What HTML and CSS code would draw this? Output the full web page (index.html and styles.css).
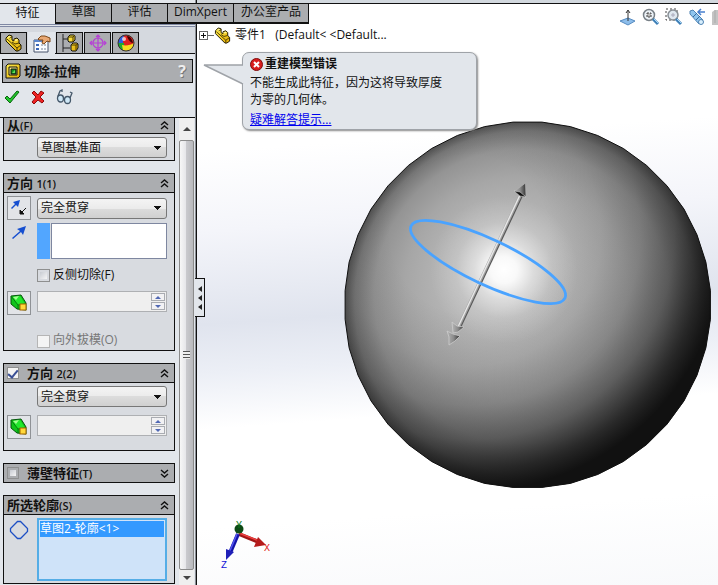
FILE: index.html
```html
<!DOCTYPE html>
<html lang="zh-CN">
<head>
<meta charset="utf-8">
<title>切除-拉伸</title>
<link rel="stylesheet" href="styles.css">
</head>
<body>
<svg class="defs" aria-hidden="true">
  <defs>
    <linearGradient id="gold" x1="0" y1="0" x2="1" y2="1"><stop offset="0" stop-color="#ffee50"/><stop offset="1" stop-color="#e0a800"/></linearGradient>
    <symbol id="part" viewBox="0 0 18 18">
      <path d="M1 4L4 1l3 1v4l2 1V5l3-1 2 2v3l2 2v4l-3 2h-2L1 7z" fill="url(#gold)" stroke="#1d1700"/>
      <path d="M2 5l10 9v3M12 14l4-3M4 4l3-1M7 8l3 2 4-1" fill="none" stroke="#4c3b00"/>
      <path d="M3 3l2-1 1 1-2 1zM9 6l3-1 1 1-2 1z" fill="#fff7a0"/>
    </symbol>
    <symbol id="draft" viewBox="0 0 18 18">
      <path d="M1 2l10-1 5 8v7l-9-1-6-5z" fill="#10c41b" stroke="#05560a"/>
      <path d="M2 3l8-1 5 8-7 1z" fill="#22e82c"/>
      <path d="M1 2l7 9v4M8 11l8-1" fill="none" stroke="#067a0e"/>
      <path d="M3 3l6-1-3 4z" fill="#a4ff94"/>
      <rect x="10" y="10" width="6" height="6" fill="#ffd83a" stroke="#a36400"/>
    </symbol>
    <symbol id="up2" viewBox="0 0 9 9"><path d="M1 4l3.500-3 3.500 3M1 8l3.500-3L8 8" fill="none" stroke="#111" stroke-width="1.400"/></symbol>
    <symbol id="down2" viewBox="0 0 9 9"><path d="M1 1l3.500 3L8 1M1 5l3.500 3L8 5" fill="none" stroke="#111" stroke-width="1.400"/></symbol>
  </defs>
</svg>
<div class="app">
  <aside class="panel">
    <nav class="tabs">
      <button class="tab active">特征</button>
      <button class="tab">草图</button>
      <button class="tab">评估</button>
      <button class="tab tight">DimXpert</button>
      <button class="tab">办公室产品</button>
    </nav>
    <div class="managers">
      <button class="mgr" aria-label="设计树"><svg width="18" height="18"><use href="#part"/></svg></button>
      <button class="mgr active" aria-label="属性">
        <svg width="18" height="18" viewBox="0 0 18 18"><path d="M1 5h14v12H1z" fill="#fafcff" stroke="#46536b"/><path d="M1 6h14" stroke="#5b86cc" stroke-width="2"/><path d="M3 9h3v2H3zM3 13h3v2H3z" fill="#3b67b8"/><path d="M8 10h6M8 14h6" stroke="#77859a" stroke-dasharray="2 1"/><path d="M5 4l3-3h4l5 2v4l-3-1-3 3-2-1 1-3H6z" fill="#e9a873" stroke="#7c4818"/></svg>
      </button>
      <button class="mgr" aria-label="配置">
        <svg width="18" height="18" viewBox="0 0 18 18"><path d="M2 0v18M2 5h5M2 14h7" stroke="#222" fill="none"/><path d="M7 3l2-2h4l1 1v4l-2 2H8L7 7zM10 11l2-2h4l1 1v4l-2 3h-4l-1-1z" fill="url(#gold)" stroke="#111"/><path d="M7 3h5l2-2M12 3v5M10 11h5l2-1M15 11v5" fill="none" stroke="#4c3b00"/></svg>
      </button>
      <button class="mgr" aria-label="尺寸专家">
        <svg width="18" height="18" viewBox="0 0 18 18"><g fill="none" stroke="#b63fd6" stroke-width="1.200"><circle cx="9" cy="9" r="5"/><path d="M9 1v16M1 9h16M7 3l2-2 2 2M7 15l2 2 2-2M3 7L1 9l2 2M15 7l2 2-2 2"/></g></svg>
      </button>
      <button class="mgr" aria-label="外观">
        <svg width="18" height="18" viewBox="0 0 18 18"><circle cx="9" cy="9" r="8" fill="#e02020"/><path d="M1 9a8 8 0 0 1 6-7.700C6 4 6 7 6 10z" fill="#2a5ce0"/><path d="M1 9l6 0 1 7.900A8 8 0 0 1 1 9z" fill="#1faa2d"/><path d="M5 11c4 1 9 0 12-2a8 8 0 0 1-11 7.500z" fill="#f5dc20"/><path d="M10 2c3 0 5 3 6 7-2 0-5-3-6-7z" fill="#400"/><circle cx="7" cy="5" r="2" fill="#fff" opacity=".7"/><circle cx="9" cy="9" r="8" fill="none" stroke="#333"/></svg>
      </button>
    </div>
    <h1 class="title">
      <svg width="16" height="16" viewBox="0 0 16 16"><path d="M1 3l2-2h11l1 1v11l-2 2H1z" fill="url(#gold)" stroke="#111"/><path d="M4 4h8v8H4z" fill="#fff38a" stroke="#111"/><path d="M6 6h5v5H6z" fill="#12951c" stroke="#111"/><path d="M7 10l3-3v3z" fill="#66e05d"/></svg>
      <span>切除-拉伸</span>
      <button class="help" aria-label="帮助">?</button>
    </h1>
    <div class="actions">
      <button aria-label="确定"><svg width="16" height="16" viewBox="0 0 16 16"><path d="M1 9l2-2 3 3 7-8 2 1-9 11z" fill="#22c52c" stroke="#07630d"/></svg></button>
      <button aria-label="取消"><svg width="14" height="14" viewBox="0 0 14 14"><path d="M1 3l2-2 4 4 3-4 3 2-4 4 4 4-2 2-4-3-4 4-2-2 4-5z" fill="#ee2424" stroke="#8e0808"/></svg></button>
      <button aria-label="预览"><svg width="18" height="16" viewBox="0 0 18 16"><g fill="#cfe8f7" stroke="#45586a" stroke-width="1.300"><ellipse cx="4.500" cy="9.500" rx="3" ry="3.500"/><ellipse cx="11.500" cy="11" rx="3" ry="3.500"/><path d="M2 7L4 2l2-1v2M14 9l2-5-2-1M7 9l2 1" fill="none"/></g></svg></button>
    </div>
    <div class="scroller">
      <div class="groups">
        <section class="group first">
          <header><h2>从<b>(F)</b></h2><button class="fold" aria-label="折叠"><svg width="9" height="9"><use href="#up2"/></svg></button></header>
          <div class="body">
            <div class="row"><span></span><select aria-label="从"><option>草图基准面</option></select></div>
          </div>
        </section>
        <section class="group">
          <header><h2>方向 <b>1(1)</b></h2><button class="fold" aria-label="折叠"><svg width="9" height="9"><use href="#up2"/></svg></button></header>
          <div class="body">
            <div class="row">
              <button class="tool" aria-label="反向"><svg width="18" height="18" viewBox="0 0 18 18"><path d="M1 9l4-4-2-2 7-2-2 7-2-2-4 4z" fill="#164fd0"/><path d="M16 9l-5 5M10 11v4h4z" fill="#111" stroke="#111"/></svg></button>
              <select aria-label="方向 1"><option>完全贯穿</option></select>
            </div>
            <div class="row pick">
              <svg class="dir" width="18" height="18" viewBox="0 0 18 18"><path d="M1 14l8-7-3-2 9-3-3 9-2-3-8 7z" fill="#164fd0"/></svg>
              <div class="picker"><span></span><textarea aria-label="拉伸方向"></textarea></div>
            </div>
            <label class="check"><input type="checkbox">反侧切除(F)</label>
            <div class="row">
              <button class="tool" aria-label="拔模"><svg width="18" height="18"><use href="#draft"/></svg></button>
              <div class="spin"><input type="text" aria-label="拔模角度" disabled><div><button class="inc" aria-label="增加"></button><button class="dec" aria-label="减少"></button></div></div>
            </div>
            <label class="check low off"><input type="checkbox" disabled>向外拔模(O)</label>
          </div>
        </section>
        <section class="group">
          <header><label><input type="checkbox" checked><h2>方向 <b>2(2)</b></h2></label><button class="fold" aria-label="折叠"><svg width="9" height="9"><use href="#up2"/></svg></button></header>
          <div class="body roomy">
            <div class="row"><span></span><select aria-label="方向 2"><option>完全贯穿</option></select></div>
            <div class="row">
              <button class="tool" aria-label="拔模"><svg width="18" height="18"><use href="#draft"/></svg></button>
              <div class="spin"><input type="text" aria-label="拔模角度 2" disabled><div><button class="inc" aria-label="增加"></button><button class="dec" aria-label="减少"></button></div></div>
            </div>
          </div>
        </section>
        <section class="group">
          <header><label><input type="checkbox"><h2>薄壁特征<b>(T)</b></h2></label><button class="fold" aria-label="展开"><svg width="9" height="9"><use href="#down2"/></svg></button></header>
        </section>
        <section class="group">
          <header><h2>所选轮廓<b>(S)</b></h2><button class="fold" aria-label="折叠"><svg width="9" height="9"><use href="#up2"/></svg></button></header>
          <div class="body">
            <div class="row pick">
              <svg class="contour" width="20" height="20" viewBox="0 0 20 20"><path d="M8.500 1.500h3l7 7v3l-7 7h-3l-7-7v-3z" fill="none" stroke="#1d4fc4" stroke-width="1.300"/></svg>
              <ul class="list" role="listbox" aria-label="所选轮廓"><li role="option" aria-selected="true">草图2-轮廓&lt;1&gt;</li></ul>
            </div>
          </div>
        </section>
      </div>
      <div class="scrollbar"><span class="arrow up"></span><span class="thumb"><i></i></span><span class="arrow down"></span></div>
    </div>
    <button class="splitter" aria-label="收起面板"><i></i><i></i><i></i></button>
  </aside>

  <main class="view">
    <svg class="scene" viewBox="197 4 521 581" preserveAspectRatio="xMinYMin meet" role="img" aria-label="球体模型">
      <defs>
        <radialGradient id="ball" gradientUnits="userSpaceOnUse" cx="528" cy="305" r="184" fx="496" fy="262">
          <stop offset="0" stop-color="#c8c8c8"/><stop offset=".3" stop-color="#b8b8b8"/><stop offset=".6" stop-color="#a6a6a6"/><stop offset=".8" stop-color="#949494"/><stop offset=".93" stop-color="#767676"/><stop offset="1" stop-color="#505050"/>
        </radialGradient>
        <radialGradient id="shade" gradientUnits="userSpaceOnUse" cx="470" cy="235" r="262">
          <stop offset=".3" stop-color="#111" stop-opacity="0"/><stop offset=".5" stop-color="#111" stop-opacity=".08"/><stop offset=".65" stop-color="#111" stop-opacity=".22"/><stop offset=".78" stop-color="#111" stop-opacity=".45"/><stop offset=".9" stop-color="#111" stop-opacity=".8"/><stop offset=".98" stop-color="#111" stop-opacity="1"/>
        </radialGradient>
        <radialGradient id="shine" gradientUnits="userSpaceOnUse" cx="504" cy="270" r="74">
          <stop offset="0" stop-color="#fff"/><stop offset=".18" stop-color="#fff" stop-opacity=".9"/><stop offset=".4" stop-color="#fff" stop-opacity=".45"/><stop offset=".65" stop-color="#fff" stop-opacity=".14"/><stop offset="1" stop-color="#fff" stop-opacity="0"/>
        </radialGradient>
        <linearGradient id="cone"><stop offset="0" stop-color="#b5b5b5"/><stop offset=".5" stop-color="#8c8c8c"/><stop offset="1" stop-color="#333"/></linearGradient>
        <polygon id="disc" points="710.400,319.400 705.900,347.800 697,375.200 684,400.900 667,424.200 646.700,444.500 623.400,461.500 597.700,474.500 570.300,483.400 541.900,487.400 513.100,487.400 484.700,483.400 457.300,474.500 431.600,461.500 408.300,444.500 388,424.200 371,400.900 358,375.200 349.100,347.800 345.100,319.400 345.100,290.600 349.100,262.200 358,234.800 371,209.100 388,185.800 408.300,165.500 431.600,148.500 457.300,135.500 484.700,126.600 513.100,122.100 541.900,122.100 570.300,126.600 597.700,135.500 623.400,148.500 646.700,165.500 667,185.800 684,209.100 697,234.800 705.900,262.200 710.400,290.600"/>
      </defs>
      <use href="#disc" fill="url(#ball)"/>
      <use href="#disc" fill="url(#shade)"/>
      <use href="#disc" fill="url(#shine)"/>
      <use href="#disc" fill="none" stroke="#111"/>
      <path d="M521 196L459 328" stroke="#555" stroke-width="3.400"/>
      <path d="M520 196L458 328" stroke="#a0a0a0" stroke-width="3"/>
      <path d="M519.500 196L457.500 328" stroke="#e8e8e8" stroke-width="1.400"/>
      <path d="M525.500 183l.5 13.500-12-5z" fill="url(#cone)" stroke="#b0b0b0" stroke-width=".800"/>
      <path d="M514 191l6 1 6 5-6-1z" fill="#111" stroke="#ddd" stroke-width=".500"/>
      <path d="M453 333l-1-11 5 4 7 1-6 5z" fill="url(#cone)" stroke="#ccc" stroke-width=".800"/>
      <path d="M449 345v-8l-2-6 6 3 7 2-5 5z" fill="url(#cone)" stroke="#ccc" stroke-width=".800"/>
      <ellipse cx="488" cy="262" rx="85" ry="22.600" transform="rotate(25.200 488 262)" fill="none" stroke="#4aa3ff" stroke-width="2.800"/>
      <g class="axes">
        <path d="M239 534l20 8" stroke="#a01616" stroke-width="4"/><path d="M239 533l20 8" stroke="#f04040" stroke-width="1.500"/><path d="M258 537l8 8-12 2z" fill="#b51b1b"/>
        <path d="M238 534l-8 19" stroke="#1414a8" stroke-width="4"/><path d="M237 534l-8 19" stroke="#5454f0" stroke-width="1.500"/><path d="M226 549l8 3-8 8z" fill="#2020b8"/>
        <circle cx="239" cy="529" r="4.500" fill="#0d4a14"/>
        <text x="236" y="528" fill="#0b7a15">Y</text><text x="264" y="551" fill="#e02020">X</text><text x="221" y="568" fill="#1515d8">Z</text>
      </g>
    </svg>
    <div class="hud">
      <div class="tree">
        <button class="plus" aria-label="展开"></button><i></i>
        <svg width="18" height="17"><use href="#part"/></svg>
        <span>零件1&nbsp;&nbsp; (Default&lt; &lt;Default...</span>
      </div>
      <div class="viewtools">
        <button aria-label="正视于"><svg width="18" height="18" viewBox="0 0 18 18"><path d="M1 13l8-3 7 3-7 4z" fill="#8dbdea" stroke="#568bc1"/><path d="M9 13V3M7 5l2-3 2 3" fill="none" stroke="#333"/></svg></button>
        <button aria-label="整屏显示"><svg width="18" height="18" viewBox="0 0 18 18"><circle cx="7" cy="7" r="5.500" fill="#edf3f8" stroke="#788087" stroke-width="1.500"/><path d="M5 5h4v4H5z" fill="#bbb" stroke="#444" stroke-dasharray="2 1"/><path d="M11 11l5 5" stroke="#3f7fb6" stroke-width="3"/><path d="M12 11l4 4" stroke="#a7d8fa"/></svg></button>
        <button aria-label="局部放大"><svg width="18" height="18" viewBox="0 0 18 18"><path d="M1 1h11v11H1z" fill="none" stroke="#444" stroke-dasharray="2 2"/><circle cx="8" cy="7" r="5" fill="#dfe8f0" stroke="#888f95" stroke-width="1.500"/><path d="M6 7h4M8 5v4" stroke="#aab"/><path d="M11 11l5 5" stroke="#3f7fb6" stroke-width="3"/><path d="M12 11l4 4" stroke="#a7d8fa"/></svg></button>
        <button aria-label="上一视图"><svg width="18" height="18" viewBox="0 0 18 18"><path d="M2 3l3-1 10 10-4 4L2 6z" fill="#8fc5ee" stroke="#4f83b3"/><path d="M5 9l4-4M8 12l4-4" stroke="#356b9e"/><circle cx="13" cy="14" r="2.500" fill="#d9effd" stroke="#4f83b3"/><path d="M17 4h-6M13 1l-3 3 3 3" fill="none" stroke="#477fce" stroke-width="1.500"/></svg></button>
        <button class="cut" aria-label="剖面视图"><svg width="18" height="18" viewBox="0 0 18 18"><path d="M1 4l3-2h12v13l-3 2H1z" fill="#c4c4c4"/><path d="M4 2v13" stroke="#aaa"/></svg></button>
      </div>
      <div class="callout" role="alert">
        <svg class="tail" width="41" height="22" viewBox="0 0 41 22"><path d="M40 1H1l39 19" fill="#e2e6eb" stroke="#9fa3a8" stroke-width="1.400"/><path d="M40 2v17" stroke="#e2e6eb" stroke-width="2"/></svg>
        <strong><svg width="13" height="13" viewBox="0 0 13 13"><circle cx="6.500" cy="6.500" r="6" fill="#d81c1c" stroke="#7e0d0d"/><path d="M4 4l5 5M9 4L4 9" stroke="#fff" stroke-width="2"/></svg>重建模型错误</strong>
        <p>不能生成此特征，因为这将导致厚度<br>为零的几何体。</p>
        <a href="#">疑难解答提示...</a>
      </div>
    </div>
  </main>
</div>
</body>
</html>
```
FILE: styles.css
```css
* { box-sizing: border-box; }

body, h1, h2, p, ul { margin: 0; padding: 0; }

body {
  font: 12px/16px "Open Sans", "Noto Sans CJK SC", sans-serif;
  color: #111;
  background: #d2d8de;
}

button, select, input, textarea { font: inherit; color: inherit; margin: 0; }

button { padding: 0; border: 0; background: none; }

svg { display: block; flex: none; }

.defs { position: absolute; width: 0; height: 0; }

.app {
  display: grid;
  grid-template-columns: 197px 1fr;
  min-height: 100vh;
}

/* Left panel */

.panel {
  position: relative;
  z-index: 1;
  display: flex;
  flex-direction: column;
  min-width: 0;
  padding-top: 3px;
  background: #e2e6eb;
  box-shadow: inset -1px 0 #111, inset -2px 0 #8b8f95;
}

.tabs {
  display: flex;
  width: max-content;
  height: 21px;
  background: #111;
}

.tab {
  min-width: 56px;
  padding: 0 7px 2px 7px;
  border: solid #111;
  border-width: 1px 1px 2px 0;
  background: #abadb0;
}

.tab.tight { padding: 0 6px 2px 6px; }

.tab.active {
  border-bottom: 0;
  background: #e2e6eb;
}

.managers {
  display: flex;
  gap: 1px;
  height: 30px;
  margin-right: 2px;
  padding-top: 8px;
  border-bottom: 1px solid #111;
  background: linear-gradient(#7f88a3 1px, #e2e6eb 1px 2px, #7f88a3 2px 3px, #d5d9df 3px);
}

.mgr {
  display: grid;
  place-items: center;
  width: 27px;
  border: solid #111;
  border-width: 1px 1px 0 1px;
  background: #abadb0;
}

.mgr.active {
  height: 22px;
  border-color: #e2e6eb;
  background: #e2e6eb;
}

.title {
  display: flex;
  align-items: center;
  gap: 3px;
  height: 24px;
  margin: 5px 4px 0 2px;
  padding: 0 6px 0 2px;
  border: 1px solid #111;
  background: #abadb0;
  font-size: 13px;
  line-height: 16px;
}

.help {
  margin-left: auto;
  color: #eee;
  font-size: 16px;
  font-weight: 700;
  text-shadow: 1px 1px #777;
}

.actions {
  display: flex;
  align-items: center;
  gap: 11px;
  height: 35px;
  margin-right: 2px;
  padding: 0 4px 6px 4px;
  border-bottom: 1px solid #111;
}

.scroller {
  display: flex;
  flex: 1;
  gap: 4px;
  margin-right: 3px;
}

.groups {
  display: flex;
  flex: 1;
  flex-direction: column;
  gap: 12px;
  min-width: 0;
  padding-left: 3px;
}

.group {
  border: 1px solid #111;
  background: #d8dbe0;
}

.group header {
  display: flex;
  align-items: center;
  justify-content: space-between;
  height: 19px;
  padding: 0 5px 0 3px;
  border-bottom: 1px solid #111;
  background: #abadb0;
}

.group header:last-child { height: 18px; border-bottom: 0; }

.group.first { border-top: 0; }

.group.first header { height: 16px; }

.group header label { display: flex; align-items: center; gap: 8px; }

h2 { font-size: 13px; line-height: 16px; font-weight: 700; }

.first h2 { line-height: 14px; }

h2 b { font-size: 11px; font-weight: 600; }

.body { padding: 3px 7px 2px 3px; }

.row {
  display: grid;
  grid-template-columns: 24px minmax(0, 1fr);
  gap: 6px;
  align-items: center;
}

.row.pick { align-items: start; }

.roomy { display: grid; gap: 8px; padding-bottom: 11px; }

.tool {
  display: grid;
  place-items: center;
  height: 24px;
  border: 1px solid #8f9296;
  background: #e2e4e8;
}

select {
  width: 100%;
  height: 21px;
  padding: 0 16px 0 3px;
  border: 1px solid #777;
  border-radius: 3px;
  appearance: none;
  background:
    linear-gradient(to bottom left, #111 50%, transparent 50%) right 8px center / 4px 4px no-repeat,
    linear-gradient(to bottom right, #111 50%, transparent 50%) right 4px center / 4px 4px no-repeat,
    linear-gradient(#f4f4f4, #ebebeb 50%, #dcdcdc 50%, #d0d0d0);
}

.dir { margin: 4px 0 0 4px; }

.contour { margin: 2px 0 0 2px; }

.picker {
  display: grid;
  grid-template-columns: 13px minmax(0, 1fr);
  gap: 1px;
  height: 36px;
  margin-top: 3px;
}

.picker span { background: #52a6ff; }

textarea {
  width: 100%;
  height: 100%;
  padding: 1px 2px;
  border: 1px solid #7e87a0;
  background: #fff;
  resize: none;
}

.check {
  display: flex;
  align-items: center;
  gap: 3px;
  height: 32px;
  padding-left: 30px;
}

.check.low {
  height: 33px;
  align-items: flex-end;
}

.check.off { color: #777; }

input[type="checkbox"] {
  display: grid;
  place-items: center;
  width: 13px;
  height: 13px;
  border: 1px solid #8e8f8f;
  appearance: none;
  background: linear-gradient(135deg, #c8ccd2, #f6f6f6) content-box #f4f4f4;
  padding: 2px;
}

input[type="checkbox"]:disabled { border-color: #b5b5b5; background: #f4f4f4; }

header input[type="checkbox"] { width: 12px; height: 12px; }

input[type="checkbox"]:checked { padding: 0; background: #f4f4f4; }

input[type="checkbox"]:checked::before {
  content: "";
  width: 4px;
  height: 8px;
  border: solid #3a4f95;
  border-width: 0 2px 2px 0;
  transform: rotate(40deg);
}

.spin {
  display: flex;
  align-self: start;
  height: 21px;
  padding: 1px;
  border: 1px solid #aeb0b3;
  background: #efefef;
}

.spin input {
  flex: 1;
  min-width: 0;
  padding: 0 2px;
  border: 0;
  background: none;
}

.spin div { display: grid; gap: 1px; width: 14px; }

.spin button {
  display: grid;
  place-items: center;
  border: 1px solid #a9acb2;
  background: #f2f2f4;
}

.spin button::before {
  content: "";
  border: solid transparent;
  border-width: 0 3px;
}

.spin .inc::before { border-bottom: 3px solid #5068b4; }

.spin .dec::before { border-top: 3px solid #5068b4; }

.list {
  height: 63px;
  padding: 1px;
  border: 2px solid #55ade6;
  background: #cfe3f9;
  list-style: none;
}

.list li { background: #3399ff; color: #fff; }

.scrollbar {
  display: flex;
  flex-direction: column;
  width: 15px;
  background: #efefef;
}

.arrow { display: grid; place-items: center; height: 22px; }

.arrow::before {
  content: "";
  border: solid transparent;
  border-width: 0 4px;
}

.arrow.up::before { border-bottom: 4px solid #444; }

.arrow.down { height: 15px; }

.arrow.down::before { border-top: 4px solid #444; }

.thumb {
  display: grid;
  flex: 1;
  place-items: center;
  border: 1px solid #8b8b8b;
  border-radius: 2px;
  background: linear-gradient(90deg, #f7f7f7, #e6e6e9 45%, #c9c9cd 50%, #b9babd);
}

.thumb i {
  width: 7px;
  height: 8px;
  background: repeating-linear-gradient(#555 0 1px, #eee 1px 3px);
}

.splitter {
  position: absolute;
  top: 278px;
  left: 195px;
  display: grid;
  place-content: center;
  gap: 3px;
  width: 10px;
  height: 39px;
  border: 1px solid #111;
  border-left: 0;
  background: #e2e6eb;
}

.splitter i {
  border: solid transparent;
  border-width: 3px 4px 3px 0;
  border-right-color: #222;
}

/* Graphics area */

.view {
  position: relative;
  margin-top: 3px;
  border-top: 1px solid #111;
  background: linear-gradient(176deg, #fff 24%, #f4f5fa 37%, #e0e4ee 52%, #eceff6 60%, #fff 69%, #fff 85%, #f8f9fb);
}

.scene {
  position: absolute;
  inset: 0;
  width: 100%;
  height: 100%;
}

.axes text { font: 10px "Liberation Mono", monospace; }

.hud {
  position: relative;
  display: grid;
  grid-template-columns: 1fr auto;
}

.tree {
  display: flex;
  align-items: center;
  height: 18px;
  margin: 22px 0 0 2px;
}

.tree > i { width: 6px; border-top: 1px solid #666; }

.tree > span { margin-left: 3px; }

.plus {
  width: 9px;
  height: 9px;
  border: 1px solid #666;
  background:
    linear-gradient(#111, #111) center / 5px 1px no-repeat,
    linear-gradient(#111, #111) center / 1px 5px no-repeat,
    #fff;
}

.viewtools {
  display: flex;
  gap: 5px;
  margin-top: 4px;
  overflow: hidden;
}

.viewtools button { align-self: start; }

.viewtools .cut { width: 7px; overflow: hidden; }

.callout {
  position: relative;
  grid-column: 1 / -1;
  width: 235px;
  margin: 8px 0 0 45px;
  padding: 3px 7px 1px;
  border: 1px solid #9fa3a8;
  border-radius: 7px;
  background: #e2e6eb;
  box-shadow: 1px 1px 2px #888;
}

.callout strong { display: flex; align-items: center; gap: 2px; }

.callout p { margin: 2px 0 4px; line-height: 17px; }

.callout a { color: #0000ee; }

.tail {
  position: absolute;
  top: 11px;
  left: -40px;
}
```
